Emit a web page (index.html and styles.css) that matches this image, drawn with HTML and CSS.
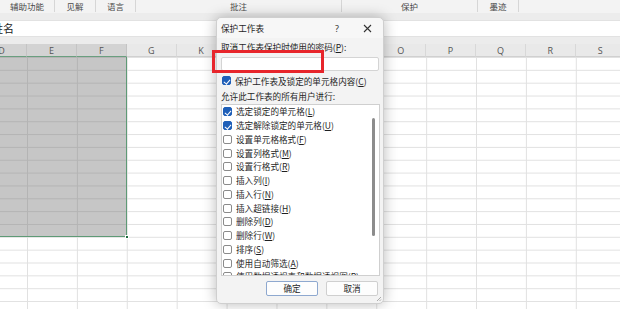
FILE: index.html
```html
<!DOCTYPE html>
<html lang="zh">
<head>
<meta charset="utf-8">
<link rel="stylesheet" href="styles.css">
</head>
<body>
<div class="app">
  <div class="ribbon">
    <div class="grp g1">辅助功能</div>
    <div class="grp g2">见解</div>
    <div class="grp g3">语言</div>
    <div class="grp g4">批注</div>
    <div class="grp g5">保护</div>
    <div class="grp g6">墨迹</div>
    <div class="grp g7"></div>
  </div>
  <div class="band"></div>
  <div class="formula"><span class="namebox">姓名</span></div>
  <div class="band"></div>
  <div class="colheads">
    <div class="ch sel">D</div>
    <div class="ch sel">E</div>
    <div class="ch sel">F</div>
    <div class="ch">G</div>
    <div class="ch">K</div>
    <div class="ch">L</div>
    <div class="ch">M</div>
    <div class="ch">N</div>
    <div class="ch">O</div>
    <div class="ch">P</div>
    <div class="ch">Q</div>
    <div class="ch">R</div>
    <div class="ch">S</div>
  </div>
  <div class="sheet">
    <div class="selection"><span class="handle"></span></div>
  </div>

  <div class="dialog">
    <div class="titlebar">
      <span class="title">保护工作表</span>
      <span class="help">?</span>
      <span class="close">
        <svg width="9" height="9" viewBox="0 0 9 9"><path d="M1 1L8 8M8 1L1 8" stroke="#333" stroke-width="1.1" fill="none"/></svg>
      </span>
    </div>
    <div class="body">
      <div class="label">取消工作表保护时使用的密码(<u>P</u>):</div>
      <div class="input"></div>
      <div class="chkrow"><span class="cb on"></span><span>保护工作表及锁定的单元格内容(<u>C</u>)</span></div>
      <div class="label2">允许此工作表的所有用户进行:</div>
      <div class="listbox">
        <div class="items">
          <div class="item"><span class="cb on"></span>选定锁定的单元格(<u>L</u>)</div>
          <div class="item"><span class="cb on"></span>选定解除锁定的单元格(<u>U</u>)</div>
          <div class="item"><span class="cb"></span>设置单元格格式(<u>F</u>)</div>
          <div class="item"><span class="cb"></span>设置列格式(<u>M</u>)</div>
          <div class="item"><span class="cb"></span>设置行格式(<u>R</u>)</div>
          <div class="item"><span class="cb"></span>插入列(<u>I</u>)</div>
          <div class="item"><span class="cb"></span>插入行(<u>N</u>)</div>
          <div class="item"><span class="cb"></span>插入超链接(<u>H</u>)</div>
          <div class="item"><span class="cb"></span>删除列(<u>D</u>)</div>
          <div class="item"><span class="cb"></span>删除行(<u>W</u>)</div>
          <div class="item"><span class="cb"></span>排序(<u>S</u>)</div>
          <div class="item"><span class="cb"></span>使用自动筛选(<u>A</u>)</div>
          <div class="item"><span class="cb"></span>使用数据透视表和数据透视图(<u>P</u>)</div>
        </div>
        <div class="scroll"><div class="thumb"></div></div>
      </div>
      <div class="buttons">
        <div class="btn default">确定</div>
        <div class="btn">取消</div>
      </div>
    </div>
    <div class="redbox"></div>
    <svg class="grip" width="6" height="6" viewBox="0 0 6 6"><path d="M5 1L1 5M5 3.5L3.5 5" stroke="#999" stroke-width="0.8"/></svg>
  </div>
</div>
</body>
</html>
```

FILE: styles.css
```css
* { box-sizing: border-box; }
html, body { margin: 0; padding: 0; }
body {
  width: 620px;
  height: 309px;
  overflow: hidden;
  background: #fff;
  font-family: "Noto Sans CJK SC", "Noto Sans", sans-serif;
  color: #1f1f1f;
}
.app { position: relative; width: 620px; height: 309px; overflow: hidden; }

.ribbon {
  height: 13px;
  display: flex;
  background: #f3f3f3;
  font-size: 8.5px;
  line-height: 13px;
  color: #4a4a4a;
}
.grp { text-align: center; border-right: 1px solid #d6d6d6; height: 12px; }
.g1 { width: 55px; }
.g2 { width: 41px; }
.g3 { width: 40px; }
.g4 { width: 206px; }
.g5 { width: 136px; }
.g6 { width: 41px; }
.g7 { flex: 1; border-right: 0; }

.band { height: 7px; background: #ececec; }
.formula {
  height: 17px;
  background: #fff;
  font-size: 11px;
  line-height: 15px;
  color: #222;
  overflow: hidden;
  border-top: 1px solid #e2e2e2;
  border-bottom: 1px solid #e2e2e2;
}
.namebox { display: inline-block; margin-left: -8px; }

.colheads {
  height: 13px;
  display: flex;
  background: #e9e9e9;
  margin-left: -22.9px;
  font-family: "Open Sans", "Noto Sans", sans-serif;
  font-size: 9px;
  line-height: 13px;
  color: #555;
}
.ch {
  flex: 0 0 49.9px;
  text-align: center;
  border-right: 1px solid #d8d8d8;
  border-bottom: 1px solid #d0d0d0;
}
.ch.sel { background: #d3d3d3; border-right-color: #c4c4c4; border-bottom: 1px solid #6a9f7f; color: #555; }

.sheet {
  height: 252px;
  background-color: #fff;
  background-image:
    linear-gradient(to right, #e1e1e1 1px, transparent 1px),
    linear-gradient(to bottom, #e1e1e1 1px, transparent 1px);
  background-size: 49.9px 100%, 100% 12.857px;
  background-position: 27px 0, 0 0;
}
.selection {
  position: relative;
  width: 127px;
  height: 180px;
  background-color: #c6c6c6;
  background-image:
    linear-gradient(to right, #b4b4b4 1px, transparent 1px),
    linear-gradient(to bottom, #b4b4b4 1px, transparent 1px);
  background-size: 49.9px 100%, 100% 12.857px;
  background-position: 27px 0, 0 12.857px;
  border-right: 1.5px solid #5e9a76;
  border-bottom: 1.5px solid #5e9a76;
}
.handle {
  position: absolute;
  right: -3px;
  bottom: -3px;
  width: 4px;
  height: 4px;
  background: #1e6b3d;
  border: 0.5px solid #fff;
}

.dialog {
  position: absolute;
  left: 216px;
  top: 17px;
  width: 168px;
  height: 287px;
  background: #f3f3f3;
  border: 1px solid #cfcfcf;
  border-radius: 5px;
  box-shadow: 0 0 14px rgba(0, 0, 0, 0.28);
  font-size: 8.6px;
  color: #1f1f1f;
}
.titlebar {
  height: 20px;
  display: flex;
  align-items: center;
  padding-left: 4px;
  background: #f7f7f7;
  border-radius: 5px 5px 0 0;
}
.title { flex: 1; font-size: 8.6px; }
.help { width: 14px; text-align: center; margin-right: 19px; font-family: "Noto Sans", sans-serif; font-size: 9px; color: #333; }
.close { width: 9px; height: 9px; margin-right: 11px; display: flex; }

.body { padding: 0 4px 0 4px; }
.label { margin-top: 3px; height: 13px; line-height: 13px; white-space: nowrap; }
.input {
  margin-top: 3px;
  width: 158px;
  height: 14px;
  background: #fff;
  border: 1px solid #d4d4d4;
  border-radius: 2px;
}
.chkrow {
  margin-top: 3px;
  height: 13px;
  display: flex;
  align-items: center;
  white-space: nowrap;
}
.cb {
  flex: 0 0 auto;
  width: 9px;
  height: 9px;
  border: 1px solid #8a8a8a;
  border-radius: 2px;
  background: #fff;
  margin-right: 4px;
  margin-left: 1px;
  position: relative;
}
.cb.on {
  background: #1f5fb8;
  border-color: #1f5fb8;
}
.cb.on::after {
  content: "";
  position: absolute;
  left: 2.3px;
  top: 0.5px;
  width: 2.5px;
  height: 5px;
  border-right: 1.2px solid #fff;
  border-bottom: 1.2px solid #fff;
  transform: rotate(40deg);
}
.label2 { margin-top: 3px; height: 13px; line-height: 13px; white-space: nowrap; }
.listbox {
  margin-top: 1px;
  width: 159px;
  height: 172px;
  background: #fff;
  border: 1px solid #cfcfcf;
  display: flex;
  overflow: hidden;
}
.items { flex: 1; overflow: hidden; }
.item {
  height: 13.75px;
  display: flex;
  align-items: center;
  white-space: nowrap;
  line-height: 13px;
}
.scroll { width: 10px; padding: 13px 3px 0 3px; }
.thumb { width: 3px; height: 118px; background: #8c8c8c; border-radius: 2px; }

.buttons {
  margin-top: 5px;
  display: flex;
  justify-content: flex-end;
  gap: 8px;
  padding-right: 1px;
}
.btn {
  width: 52px;
  height: 15px;
  line-height: 13px;
  text-align: center;
  background: #fdfdfd;
  border: 1px solid #cfcfcf;
  border-radius: 2px;
}
.btn.default { border: 1px solid #8ea8cf; }

.redbox {
  position: absolute;
  left: -5px;
  top: 32px;
  width: 112px;
  height: 23px;
  border: 3px solid #e7252b;
}
.grip { position: absolute; right: 1px; bottom: 1px; }
```
